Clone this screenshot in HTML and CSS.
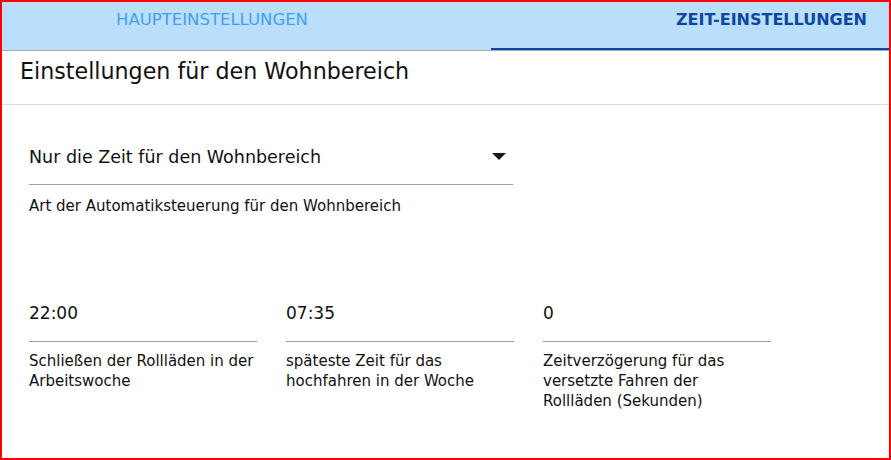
FILE: index.html
```html
<!DOCTYPE html>
<html lang="de">
<head>
    <meta charset="UTF-8">
    <meta name="viewport" content="width=device-width, initial-scale=1.0">
    <title>Zeit-Einstellungen</title>
    <link rel="stylesheet" href="styles.css">
</head>
<body>
    <div class="tabs">
        <div class="tab">Haupteinstellungen</div>
        <div class="tab active">Zeit-Einstellungen</div>
    </div>
    <div class="header">Einstellungen für den Wohnbereich</div>
    <div class="content">
        <div class="select">
            <div class="select-row">
                <span>Nur die Zeit für den Wohnbereich</span>
                <svg class="arrow" width="14" height="7" viewBox="0 0 14 7"><polygon points="0,0 14,0 7,7"/></svg>
            </div>
            <div class="helper">Art der Automatiksteuerung für den Wohnbereich</div>
        </div>
        <div class="fields">
            <div class="field">
                <div class="value">22:00</div>
                <div class="helper">Schließen der Rollläden in der Arbeitswoche</div>
            </div>
            <div class="field">
                <div class="value">07:35</div>
                <div class="helper">späteste Zeit für das hochfahren in der Woche</div>
            </div>
            <div class="field">
                <div class="value">0</div>
                <div class="helper">Zeitverzögerung für das versetzte Fahren der Rollläden (Sekunden)</div>
            </div>
        </div>
    </div>
</body>
</html>
```

FILE: styles.css
```css
*{
    padding: 0;
    margin: 0;
    box-sizing: border-box;
}
body{
    width: 891px;
    height: 460px;
    border: 2px solid #ff0000;
    background: #fff;
    font-family: "DejaVu Sans", sans-serif;
    color: #111;
    overflow: hidden;
}
.tabs{
    display: flex;
    height: 49px;
    background: #bbdefb;
    border-bottom: 1px solid #a8a8a8;
}
.tab{
    flex: 0 0 489px;
    height: 48px;
    padding: 8px 0 0 114px;
    font-size: 16.5px;
    line-height: 20px;
    text-transform: uppercase;
    color: #42a0f0;
}
.tab.active{
    flex: 1;
    padding: 8px 22px 0 0;
    text-align: right;
    font-size: 16px;
    font-weight: bold;
    color: #0d47a1;
    border-bottom: 2px solid #0d47a1;
}
.header{
    padding: 7px 18px 20px;
    font-size: 22.2px;
    line-height: 26px;
    border-bottom: 1px solid #dcdcdc;
}
.content{
    padding: 40px 0 0 27px;
}
.select{
    width: 484px;
}
.select-row{
    display: flex;
    justify-content: space-between;
    align-items: center;
    height: 40px;
    padding-bottom: 16px;
    font-size: 17.5px;
    line-height: 24px;
    border-bottom: 1px solid #9e9e9e;
}
.arrow{
    margin-right: 7px;
    fill: #1a1a1a;
}
.helper{
    margin-top: 11px;
    font-size: 15px;
    line-height: 20px;
}
.fields{
    display: flex;
    gap: 29px;
    margin-top: 85px;
}
.field{
    flex: 0 0 228px;
}
.value{
    height: 41px;
    padding-bottom: 17px;
    font-size: 17px;
    line-height: 24px;
    border-bottom: 1px solid #9e9e9e;
}
.field .helper{
    margin-top: 9px;
}
```
